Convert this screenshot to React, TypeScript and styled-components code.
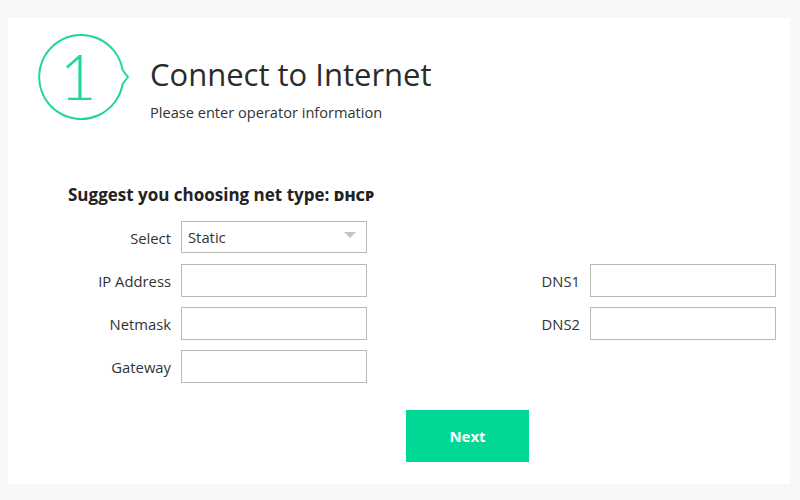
import React from 'react';
import styled, { createGlobalStyle } from 'styled-components';

const GlobalStyle = createGlobalStyle`
  html, body {
    margin: 0;
    padding: 0;
    background: #f7f7f7;
    font-family: "Open Sans", "Noto Sans", sans-serif;
    color: #333;
  }
`;

const Page = styled.div`
  width: 800px;
  height: 500px;
  padding: 18px 10px 16px 8px;
  box-sizing: border-box;
`;

const Card = styled.div`
  background: #fff;
  height: 100%;
  box-sizing: border-box;
  padding: 15px 14px 0 30px;
`;

const Header = styled.div`
  display: flex;
  align-items: flex-start;
`;

const StepBadge = styled.svg`
  width: 92px;
  height: 88px;
  flex: none;
`;

const HeaderText = styled.div`
  margin-left: 20px;
  padding-top: 21px;
`;

const Title = styled.h1`
  margin: 0;
  font-size: 31px;
  font-weight: 400;
  line-height: 40px;
  color: #2b2b2b;
`;

const Subtitle = styled.p`
  margin: 8px 0 0;
  font-size: 14.6px;
  line-height: 20px;
  color: #333;
`;

const Form = styled.div`
  margin: 62px 0 0 30px;
`;

const Hint = styled.h2`
  margin: 0 0 14px;
  font-size: 17px;
  font-weight: 700;
  line-height: 22px;
  color: #222;

  & > b {
    font-size: 14.5px;
  }
`;

const Grid = styled.div`
  display: grid;
  grid-template-columns: 103px 186px 1fr 50px 186px;
  grid-auto-rows: 33px;
  column-gap: 10px;
  row-gap: 10px;
`;

const Label = styled.label<{ $col: number; $row: number }>`
  grid-column: ${(p) => p.$col};
  grid-row: ${(p) => p.$row};
  align-self: center;
  justify-self: end;
  font-size: 14.8px;
  color: #333;
  white-space: nowrap;
`;

const Field = styled.input<{ $col: number; $row: number }>`
  grid-column: ${(p) => p.$col};
  grid-row: ${(p) => p.$row};
  box-sizing: border-box;
  width: 100%;
  height: 33px;
  margin: 0;
  border: 1px solid #b9b9b9;
  background: #fff;
  padding: 0 6px;
  font: inherit;
  font-size: 14px;
  outline: none;
`;

const SelectBox = styled.div`
  grid-column: 2;
  grid-row: 1;
  box-sizing: border-box;
  height: 32px;
  border: 1px solid #b9b9b9;
  display: flex;
  align-items: center;
  padding: 0 6px;
  font-size: 14.8px;
  color: #333;
`;

const Caret = styled.span`
  margin-left: auto;
  margin-right: 4px;
  width: 0;
  height: 0;
  border-left: 6px solid transparent;
  border-right: 6px solid transparent;
  border-top: 6px solid #c4c4c4;
  margin-top: -4px;
`;

const Actions = styled.div`
  padding-left: 368px;
  margin-top: 27px;
`;

const NextButton = styled.button`
  width: 123px;
  height: 52px;
  border: none;
  background: #00d895;
  color: #fff;
  font-family: inherit;
  font-size: 15px;
  font-weight: 700;
  cursor: pointer;
`;

const App: React.FC = () => {
  return (
    <>
      <GlobalStyle />
      <Page>
        <Card>
          <Header>
            <StepBadge viewBox="0 0 92 88">
              <path
                d="M84.6 37 A42 42 0 1 0 84.6 51 L90 44 Z"
                fill="none"
                stroke="#1fd69b"
                strokeWidth="2"
                strokeLinejoin="round"
              />
              <text
                x="40"
                y="67"
                textAnchor="middle"
                fontSize="64"
                fontWeight="300"
                fontFamily="Lato, 'Open Sans', sans-serif"
                fill="#1fd69b"
              >
                1
              </text>
            </StepBadge>
            <HeaderText>
              <Title>Connect to Internet</Title>
              <Subtitle>Please enter operator information</Subtitle>
            </HeaderText>
          </Header>

          <Form>
            <Hint>
              Suggest you choosing net type: <b>DHCP</b>
            </Hint>
            <Grid>
              <Label $col={1} $row={1}>Select</Label>
              <SelectBox>
                Static
                <Caret />
              </SelectBox>

              <Label $col={1} $row={2}>IP Address</Label>
              <Field $col={2} $row={2} />
              <Label $col={4} $row={2}>DNS1</Label>
              <Field $col={5} $row={2} />

              <Label $col={1} $row={3}>Netmask</Label>
              <Field $col={2} $row={3} />
              <Label $col={4} $row={3}>DNS2</Label>
              <Field $col={5} $row={3} />

              <Label $col={1} $row={4}>Gateway</Label>
              <Field $col={2} $row={4} />
            </Grid>
          </Form>

          <Actions>
            <NextButton>Next</NextButton>
          </Actions>
        </Card>
      </Page>
    </>
  );
};

export default App;
